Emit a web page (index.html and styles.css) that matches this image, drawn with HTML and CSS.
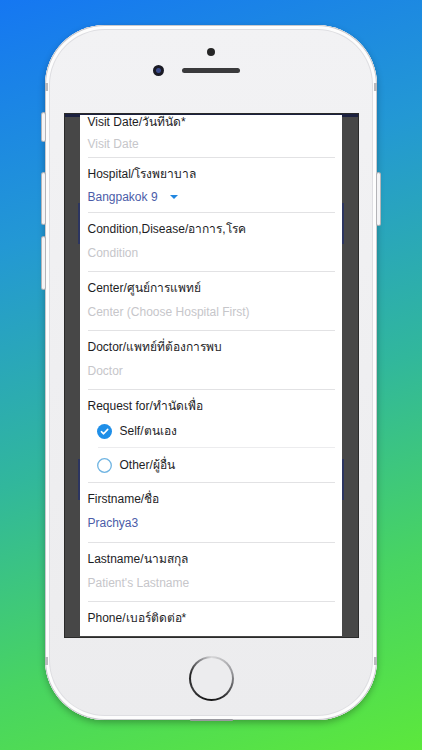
FILE: index.html
```html
<!DOCTYPE html>
<html>
<head>
<meta charset="utf-8">
<link rel="stylesheet" href="styles.css">
</head>
<body>
<div class="bg">
  <div class="phone">
    <span class="btn btn-l1"></span>
    <span class="btn btn-l2"></span>
    <span class="btn btn-l3"></span>
    <span class="btn btn-r1"></span>
    <span class="band band-tl"></span>
    <span class="band band-tr"></span>
    <span class="band band-bl"></span>
    <span class="band band-br"></span>
    <span class="port"></span>
    <div class="top">
      <div class="sensor"></div>
      <div class="cam-row">
        <div class="cam"></div>
        <div class="speaker"></div>
        <div></div>
      </div>
    </div>
    <div class="screen">
      <div class="page">
        <div class="form">
          <div class="field visit">
            <div class="label">Visit Date/วันที่นัด*</div>
            <div class="value ph">Visit Date</div>
          </div>
          <div class="field compact">
            <div class="label">Hospital/โรงพยาบาล</div>
            <div class="value sel">Bangpakok 9 <span class="caret"></span></div>
          </div>
          <div class="field">
            <div class="label">Condition,Disease/อาการ,โรค</div>
            <div class="value ph">Condition</div>
          </div>
          <div class="field">
            <div class="label">Center/ศูนย์การแพทย์</div>
            <div class="value ph">Center (Choose Hospital First)</div>
          </div>
          <div class="field">
            <div class="label">Doctor/แพทย์ที่ต้องการพบ</div>
            <div class="value ph">Doctor</div>
          </div>
          <div class="field radios">
            <div class="label">Request for/ทำนัดเพื่อ</div>
            <div class="radio first">
              <svg class="ico" width="15" height="15" viewBox="0 0 15 15"><circle cx="7.5" cy="7.5" r="7.5" fill="#1f8fe8"/><path d="M4.4 7.7 L6.6 9.8 L10.7 5.4" fill="none" stroke="#fff" stroke-width="1.6" stroke-linecap="round" stroke-linejoin="round"/></svg>
              <span>Self/ตนเอง</span>
            </div>
            <div class="radio last">
              <svg class="ico" width="15" height="15" viewBox="0 0 15 15"><circle cx="7.5" cy="7.5" r="6.8" fill="none" stroke="#6fb4e2" stroke-width="1.3"/></svg>
              <span>Other/ผู้อื่น</span>
            </div>
          </div>
          <div class="field tall">
            <div class="label">Firstname/ชื่อ</div>
            <div class="value sel">Prachya3</div>
          </div>
          <div class="field">
            <div class="label">Lastname/นามสกุล</div>
            <div class="value ph">Patient's Lastname</div>
          </div>
          <div class="field">
            <div class="label">Phone/เบอร์ติดต่อ*</div>
            <div class="value ph"></div>
          </div>
        </div>
      </div>
    </div>
    <div class="bottom">
      <div class="home"><div class="home-in"></div></div>
    </div>
  </div>
</div>
</body>
</html>
```

FILE: styles.css
```css
html, body {
  margin: 0;
  padding: 0;
}
body {
  width: 422px;
  height: 750px;
  overflow: hidden;
  font-family: "Liberation Sans", "Noto Sans", "DejaVu Sans", sans-serif;
}
.bg {
  width: 422px;
  height: 750px;
  box-sizing: border-box;
  padding-top: 25px;
  display: flex;
  justify-content: center;
  background: linear-gradient(162deg, #1577f2 0%, #2398d4 28%, #31b79c 55%, #48d462 78%, #5ce83c 100%);
}
.phone {
  position: relative;
  width: 332px;
  height: 695px;
  box-sizing: border-box;
  border-radius: 60px;
  background: linear-gradient(#f2f2f4, #ececee);
  box-shadow: 0 3px 7px rgba(0,0,0,0.28), inset 0 0 0 1px #c9c9cd, inset 0 0 0 4px #fdfdfd, inset 0 0 0 5px #dedee2;
  display: flex;
  flex-direction: column;
  align-items: center;
}
.btn {
  position: absolute;
  width: 3px;
  border-radius: 2px;
  background: #f4f4f6;
  box-shadow: 0 0 0 1px #b4b4b8;
}
.btn-l1 { left: -3px; top: 88px; height: 28px; }
.btn-l2 { left: -3px; top: 148px; height: 51px; }
.btn-l3 { left: -3px; top: 212px; height: 52px; }
.btn-r1 { right: -3px; top: 148px; height: 52px; }
.band {
  position: absolute;
  width: 3px;
  height: 8px;
  background: #b9b9bd;
}
.band-tl { left: 0; top: 58px; }
.band-tr { right: 0; top: 58px; }
.band-bl { left: 0; top: 632px; }
.band-br { right: 0; top: 632px; }
.port {
  position: absolute;
  left: 145px;
  bottom: -1px;
  width: 43px;
  height: 2px;
  background: #9a9aa0;
  border-radius: 1px;
}
.top {
  height: 88px;
  width: 100%;
  display: flex;
  flex-direction: column;
  align-items: center;
}
.sensor {
  margin-top: 23px;
  width: 8px;
  height: 8px;
  border-radius: 50%;
  background: #262626;
}
.cam-row {
  margin-top: 9px;
  width: 100%;
  display: grid;
  grid-template-columns: 1fr auto 1fr;
  align-items: center;
}
.cam {
  justify-self: end;
  margin-right: 18px;
  width: 11px;
  height: 11px;
  border-radius: 50%;
  background: radial-gradient(circle at 50% 50%, #3a4a8a 0 2px, #1a1a24 3px);
}
.speaker {
  width: 58px;
  height: 5px;
  border-radius: 3px;
  background: #3a3a3c;
}
.screen {
  width: 295px;
  height: 525px;
  box-sizing: border-box;
  border: 1px solid #2a2a2a;
  padding: 1px 16px 1px 15px;
  background:
    linear-gradient(#2c3560, #2c3560) 13px 89px / 2px 41px no-repeat,
    linear-gradient(#2c3560, #2c3560) 13px 345px / 2px 41px no-repeat,
    linear-gradient(#2c3560, #2c3560) 277px 89px / 2px 41px no-repeat,
    linear-gradient(#2c3560, #2c3560) 277px 345px / 2px 41px no-repeat,
    linear-gradient(#1c2140 0 3px, #474747 3px);
}
.page {
  height: 100%;
  background: #fff;
  overflow: hidden;
}
.form {
  margin-top: -2px;
  padding: 0 7px 0 8px;
}
.field {
  display: flex;
  flex-direction: column;
  gap: 8px;
  padding: 8px 0 10px;
  border-bottom: 1px solid #e2e2e4;
}
.field.visit {
  padding: 1px 0 5px;
  gap: 6px;
}
.field.compact {
  gap: 7px;
  padding-bottom: 7px;
}
.field.tall {
  padding-bottom: 11px;
}
.field.radios {
  gap: 0;
  padding-bottom: 0;
}
.label, .value, .radio span {
  font-size: 12px;
  line-height: 16px;
  height: 16px;
  white-space: nowrap;
}
.label {
  color: #1d1d1f;
}
.value.ph {
  color: #c6c6ca;
}
.value.sel {
  color: #4b5ca8;
  display: flex;
  align-items: center;
}
.caret {
  margin-left: 12px;
  width: 0;
  height: 0;
  border-left: 4px solid transparent;
  border-right: 4px solid transparent;
  border-top: 4px solid #2186e0;
}
.radio {
  display: flex;
  align-items: center;
  gap: 8px;
  margin-left: 10px;
  padding: 9px 0 8px;
}
.radio .ico {
  margin-left: -1px;
  flex: none;
}
.radio span {
  color: #1d1d1f;
}
.radio.first {
  border-bottom: 1px solid #ececee;
}
.radio.last {
  padding-bottom: 9px;
}
.bottom {
  flex: 1;
  width: 100%;
  display: flex;
  justify-content: center;
}
.home {
  margin-top: 18px;
  width: 45px;
  height: 45px;
  box-sizing: border-box;
  border-radius: 50%;
  padding: 2px;
  background: conic-gradient(from 0deg, #d8d8da 0deg, #9a9a9e 70deg, #2a2a2c 150deg, #111 190deg, #3a3a3c 240deg, #222 280deg, #8a8a8e 330deg, #d8d8da 360deg);
}
.home-in {
  width: 100%;
  height: 100%;
  border-radius: 50%;
  background: #ececee;
}
```
